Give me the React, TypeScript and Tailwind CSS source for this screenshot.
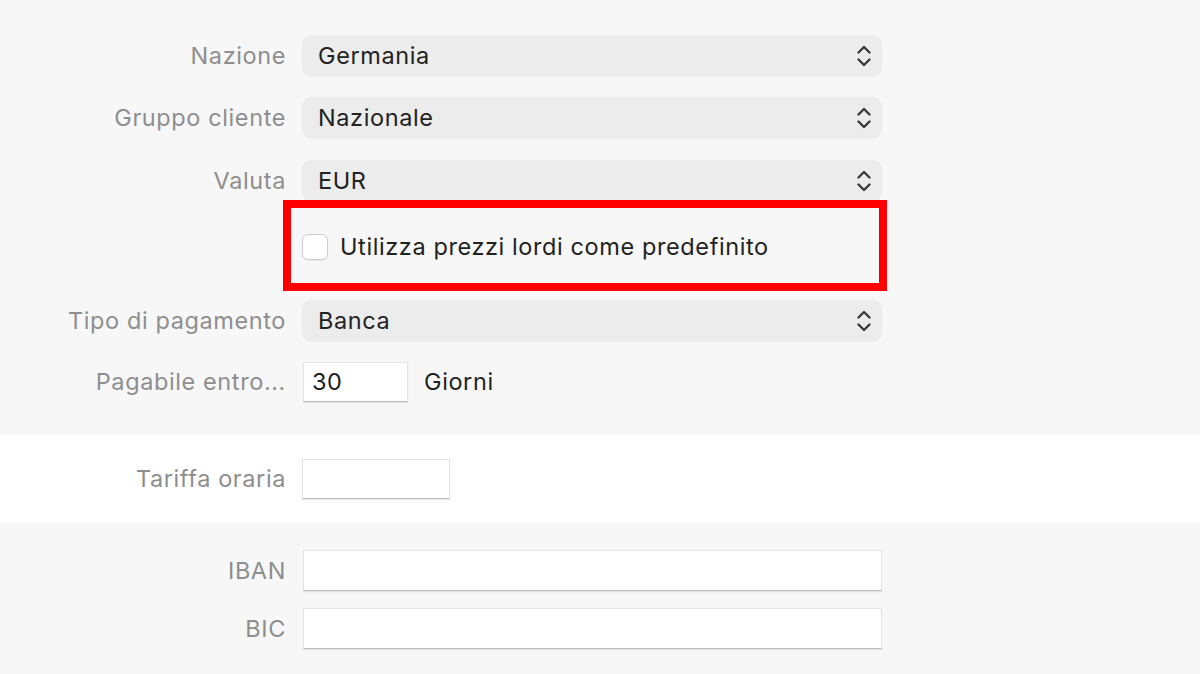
import React from "react";

const font = { fontFamily: "Inter, 'Noto Sans', sans-serif" };

function Chevrons() {
  return (
    <svg width="14" height="22" viewBox="0 0 14 22" fill="none" className="shrink-0">
      <path d="M1.5 7.5 L7 2 L12.5 7.5" stroke="#3a3a3a" strokeWidth="2.4" strokeLinecap="round" strokeLinejoin="round" />
      <path d="M1.5 14.5 L7 20 L12.5 14.5" stroke="#3a3a3a" strokeWidth="2.4" strokeLinecap="round" strokeLinejoin="round" />
    </svg>
  );
}

function Row({ label, children, className = "" }: { label?: string; children: React.ReactNode; className?: string }) {
  return (
    <div className={`grid grid-cols-[286px_1fr] gap-x-4 ${className}`}>
      <div className="flex items-center justify-end whitespace-nowrap text-[23.5px] tracking-[0.6px] text-[#8e8e8e]">{label}</div>
      <div className="flex items-center">{children}</div>
    </div>
  );
}

function Select({ value }: { value: string }) {
  return (
    <div className="flex h-[42px] w-[580px] items-center justify-between rounded-[9px] bg-[#ececec] pl-4 pr-[11px] text-[23.5px] tracking-[0.6px] text-[#222]">
      <span>{value}</span>
      <Chevrons />
    </div>
  );
}

function TextInput({ value, width }: { value?: string; width: string }) {
  return (
    <div
      className={`flex h-[40px] ${width} items-center border border-[#e3e3e3] border-b-[#bcbcbc] bg-white pl-2 text-[23.5px] tracking-[0.6px] text-[#222] shadow-[0_1px_1px_rgba(0,0,0,0.08)]`}
    >
      {value}
    </div>
  );
}

export default function App() {
  return (
    <div className="h-[674px] w-[1200px] overflow-hidden bg-[#f7f7f7]" style={font}>
      <section className="pt-[35px] pb-[33px]">
        <Row label="Nazione" className="h-[42px]">
          <Select value="Germania" />
        </Row>
        <Row label="Gruppo cliente" className="mt-5 h-[42px]">
          <Select value="Nazionale" />
        </Row>
        <Row label="Valuta" className="mt-[21px] h-[42px]">
          <Select value="EUR" />
        </Row>
        <Row className="h-[98px]">
          <div className="relative flex h-full w-[580px] items-center gap-3 pb-2">
            <div className="h-[26px] w-[26px] rounded-[6px] border border-[#cdcdcd] bg-white shadow-[0_1px_1px_rgba(0,0,0,0.06)]" />
            <span className="text-[23.5px] tracking-[0.6px] text-[#222]">Utilizza prezzi lordi come predefinito</span>
            <div className="pointer-events-none absolute -left-[19px] -right-[5px] -top-[2px] bottom-[9px] border-[8px] border-[#ff0000]" />
          </div>
        </Row>
        <Row label="Tipo di pagamento" className="h-[42px]">
          <Select value="Banca" />
        </Row>
        <Row label="Pagabile entro..." className="mt-5 h-[40px]">
          <div className="flex items-center gap-4 pl-px">
            <TextInput value="30" width="w-[105px]" />
            <span className="text-[23.5px] tracking-[0.6px] text-[#222]">Giorni</span>
          </div>
        </Row>
      </section>

      <section className="bg-white py-6">
        <Row label="Tariffa oraria" className="h-[40px]">
          <TextInput width="w-[148px]" />
        </Row>
      </section>

      <section className="pt-[27px]">
        <Row label="IBAN" className="h-[41px]">
          <div className="pl-px">
            <TextInput width="w-[579px] h-[41px]" />
          </div>
        </Row>
        <Row label="BIC" className="mt-[17px] h-[41px]">
          <div className="pl-px">
            <TextInput width="w-[579px] h-[41px]" />
          </div>
        </Row>
      </section>
    </div>
  );
}
